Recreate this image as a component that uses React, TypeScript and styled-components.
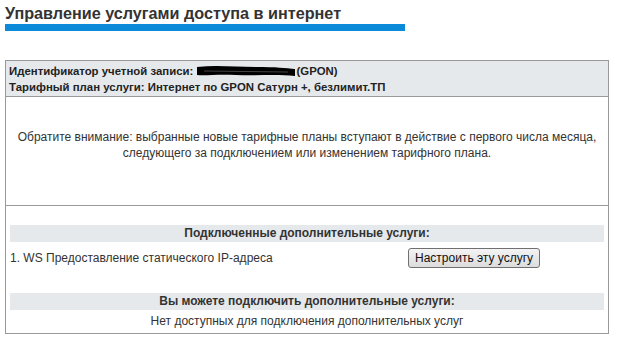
import React from 'react';
import styled, { createGlobalStyle } from 'styled-components';

const GlobalStyle = createGlobalStyle`
    body {
        margin: 0;
        background: #fff;
        font-family: "Liberation Sans", Arial, sans-serif;
        font-size: 12px;
        color: #333;
    }
`;

const Page = styled.div`
    padding: 2px 5px 0 5px;
    width: 604px;
`;

const Title = styled.h1`
    margin: 0;
    font-size: 16.2px;
    line-height: 22px;
    font-weight: bold;
    color: #333;
`;

const TitleBar = styled.div`
    width: 400px;
    height: 7px;
    background: #0a8ad8;
`;

const Box = styled.div`
    margin-top: 29px;
    border: 1px solid #999;
    display: flex;
    flex-direction: column;
`;

const Head = styled.div`
    background: #e6e9ec;
    border-bottom: 1px solid #999;
    padding: 2px 3px 3px;
    font-weight: bold;
    font-size: 11.4px;
    color: #222;
    line-height: 16px;
    height: 30px;
`;

const Notice = styled.div`
    height: 109px;
    border-bottom: 1px solid #999;
    display: flex;
    align-items: center;
    justify-content: center;
    text-align: center;
    line-height: 16px;
    padding: 0 8px 12px;
    box-sizing: border-box;
    color: #333;
`;

const Services = styled.div`
    padding: 19px 4px 4px;
    display: flex;
    flex-direction: column;
`;

const SectionBar = styled.div<{ gap?: number }>`
    background: #e6e9ec;
    font-weight: bold;
    text-align: center;
    line-height: 17px;
    height: 17px;
    margin-top: ${p => p.gap ?? 0}px;
    color: #333;
`;

const ServiceRow = styled.div`
    display: grid;
    grid-template-columns: 398px 1fr;
    align-items: center;
    margin-top: 5px;
    height: 22px;
`;

const Button = styled.button`
    justify-self: start;
    font-family: "Liberation Sans", Arial, sans-serif;
    font-size: 12px;
    color: #111;
    height: 20px;
    padding: 0 6px;
    border: 1px solid #707070;
    border-radius: 3px;
    background: linear-gradient(#f4f4f4, #dcdcdc);
`;

const EmptyLine = styled.div`
    text-align: center;
    line-height: 16px;
    margin-top: 3px;
`;

const Redacted = styled.svg`
    vertical-align: -2px;
`;

export default function App() {
    return (
        <>
            <GlobalStyle />
            <Page>
                <Title>Управление услугами доступа в интернет</Title>
                <TitleBar />
                <Box>
                    <Head>
                        Идентификатор учетной записи:{' '}
                        <Redacted width="100" height="12" viewBox="0 0 100 12">
                            <path d="M1 2 C 20 0, 40 2, 60 2 S 90 3, 99 4 L 99 11 C 80 9, 60 11, 40 10 S 10 11, 1 10 Z" fill="#000" />
                            <path d="M8 6 L 92 7" stroke="#444" strokeWidth="1" />
                        </Redacted>
                        (GPON)
                        <br />
                        Тарифный план услуги: Интернет по GPON Сатурн +, безлимит.ТП
                    </Head>
                    <Notice>
                        Обратите внимание: выбранные новые тарифные планы вступают в действие с первого числа месяца,
                        <br />
                        следующего за подключением или изменением тарифного плана.
                    </Notice>
                    <Services>
                        <SectionBar>Подключенные дополнительные услуги:</SectionBar>
                        <ServiceRow>
                            <span>1. WS Предоставление статического IP-адреса</span>
                            <Button>Настроить эту услугу</Button>
                        </ServiceRow>
                        <SectionBar gap={24}>Вы можете подключить дополнительные услуги:</SectionBar>
                        <EmptyLine>Нет доступных для подключения дополнительных услуг</EmptyLine>
                    </Services>
                </Box>
            </Page>
        </>
    );
}
